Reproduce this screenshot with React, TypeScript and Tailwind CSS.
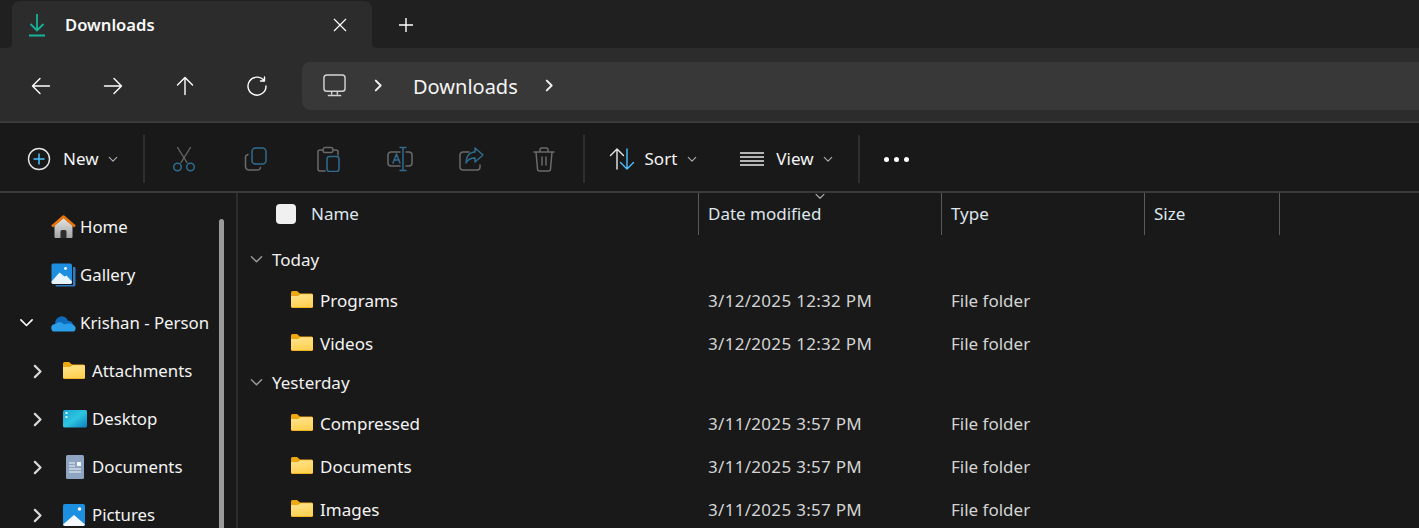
import type { ReactNode } from 'react';

const line = { fill: 'none', stroke: 'currentColor', strokeWidth: 1.3, strokeLinecap: 'round', strokeLinejoin: 'round' } as const;

const Chevron = ({ className }: { className: string }) => (
  <svg viewBox="0 0 12 8" className={className} {...line}>
    <path d="M1.500 1.500 6 6l4.500-4.500" />
  </svg>
);

const ChevronRight = ({ className }: { className: string }) => (
  <svg viewBox="0 0 8 12" className={className} {...line} strokeWidth={1.800}>
    <path d="M1.500 1.500 6 6l-4.500 4.500" />
  </svg>
);

const FolderIcon = () => (
  <svg viewBox="0 0 22 17" className="w-[22px] h-[17px] -translate-y-[1px]">
    <defs>
      <linearGradient id="folderFill" x1="0" y1="0" x2="0.300" y2="1">
        <stop offset="0" stopColor="#ffe48f" />
        <stop offset="1" stopColor="#ffd255" />
      </linearGradient>
    </defs>
    <path d="M0 1.500A1.500 1.500 0 0 1 1.500 0h4.500l3 2.500h11.500A1.500 1.500 0 0 1 22 4v11.500a1.500 1.500 0 0 1-1.500 1.500h-19A1.500 1.500 0 0 1 0 15.500z" fill="#eea812" />
    <path d="M0 5h7l2.500-1.800h11.300A1.200 1.200 0 0 1 22 4.400V15a1.200 1.200 0 0 1-1.200 1.200H1.200A1.200 1.200 0 0 1 0 15z" fill="url(#folderFill)" />
  </svg>
);

const HomeIcon = () => (
  <svg viewBox="0 0 25 24" className="w-[25px] h-[24px]">
    <defs>
      <linearGradient id="homeFill" x1="0" y1="0" x2="0" y2="1">
        <stop offset="0" stopColor="#e4e4e4" />
        <stop offset="1" stopColor="#a4a4a4" />
      </linearGradient>
    </defs>
    <path d="M3.500 10.500 12.500 3l9 7.500V22a1 1 0 0 1-1 1h-16a1 1 0 0 1-1-1z" fill="url(#homeFill)" />
    <path d="M9.500 23v-6.500a1.500 1.500 0 0 1 1.500-1.500h3a1.500 1.500 0 0 1 1.500 1.500V23z" fill="#2e2e2e" />
    <path d="M1 11.500 12.500 1.500 24 11.500" fill="none" stroke="#e8760c" strokeWidth="2.600" strokeLinejoin="round" />
  </svg>
);

const GalleryIcon = () => (
  <svg viewBox="0 0 25 24" className="w-[25px] h-[24px]">
    <path d="M22 4h1.500a1 1 0 0 1 1 1V22a1.500 1.500 0 0 1-1.500 1.500H6a1.500 1.500 0 0 1-1.500-1.500H22z" fill="#2f7cc4" />
    <rect x="0.500" y="0.500" width="20.500" height="20.500" rx="1.800" fill="#1e8fe0" />
    <circle cx="14.500" cy="5.500" r="1.400" fill="#ffffff" />
    <path d="M0.500 18.500 8.500 9.500l5 4 2-1 5.500 6v1a1.800 1.800 0 0 1-1.800 1.500H2.300a1.800 1.800 0 0 1-1.800-1.500z" fill="#e8f4fd" />
  </svg>
);

const CloudIcon = () => (
  <svg viewBox="0 0 25 17" className="w-[25px] h-[17px]">
    <path d="M4.500 10A6.500 6.500 0 0 1 17 5.800 5 5 0 0 1 22 10L10 13z" fill="#0f6cbd" />
    <path d="M1 15.500C-1 12 1 8.800 4.500 9 7 6.500 11 7 13 9.500c3.500-1.500 7-1.500 9.500.5 2.500 1.500 2.500 4 1.500 5.500a1.500 1.500 0 0 1-1.500 1H2.500A2 2 0 0 1 1 15.500z" fill="#2a9ee8" />
  </svg>
);

const DesktopIcon = () => (
  <svg viewBox="0 0 24 18" className="w-[24px] h-[18px]">
    <defs>
      <linearGradient id="desk" x1="0" y1="0" x2="1" y2="1">
        <stop offset="0" stopColor="#1aa5d6" />
        <stop offset="0.500" stopColor="#2ec5e0" />
        <stop offset="1" stopColor="#0c7fc0" />
      </linearGradient>
    </defs>
    <rect x="0" y="0" width="24" height="17.500" rx="1.500" fill="url(#desk)" />
    <rect x="2.500" y="2" width="2" height="2" fill="#e8f8fc" />
    <rect x="2.500" y="6" width="2" height="2" fill="#e8f8fc" />
  </svg>
);

const DocumentIcon = () => (
  <svg viewBox="0 0 18 24" className="w-[18px] h-[24px]">
    <rect x="0" y="0" width="18" height="24" rx="1.500" fill="#8ea4c0" />
    <rect x="11" y="7" width="4" height="4" fill="#f2f5f9" />
    <path d="M3 8h6M3 11h6M3 14h12M3 17h12" stroke="#f2f5f9" strokeWidth="1.100" />
  </svg>
);

const PicturesIcon = () => (
  <svg viewBox="0 0 22 22" className="w-[22px] h-[22px]">
    <rect x="0" y="0" width="22" height="22" rx="1.800" fill="#1d8fe1" />
    <circle cx="16.500" cy="5" r="1.800" fill="#ffffff" />
    <path d="M0 20.500 11 11l11 9.500V20a2 2 0 0 1-2 2H2a2 2 0 0 1-2-2z" fill="#f4f9fd" />
  </svg>
);

const NavIcon = ({ children }: { children: ReactNode }) => (
  <span className="w-[72px] h-[40px] flex items-center justify-center text-white">
    <svg viewBox="0 0 22 22" className="w-[22px] h-[22px]" {...line} strokeWidth={1.400}>
      {children}
    </svg>
  </span>
);

const CommandIcon = ({ children }: { children: ReactNode }) => (
  <span className="w-[72px] h-[40px] flex items-center justify-center shrink-0">
    <svg viewBox="0 0 26 26" className="w-[26px] h-[26px]" fill="none" strokeWidth="1.300" strokeLinecap="round" strokeLinejoin="round">
      {children}
    </svg>
  </span>
);

const Divider = ({ className = '' }: { className?: string }) => <div className={`w-[2px] h-[48px] bg-[#2e2e2e] shrink-0 ${className}`} />;

const SideItem = ({ icon, label, arrow, indent }: { icon: ReactNode; label: string; arrow?: 'open' | 'closed'; indent?: boolean }) => (
  <div className="h-[48px] flex items-center shrink-0 whitespace-nowrap text-[#f4f4f4]">
    <span className="w-[50px] flex shrink-0 justify-center">
      {arrow === 'open' && <Chevron className="w-[15px] h-[10px] text-white ml-[2px]" />}
      {arrow === 'closed' && <ChevronRight className="w-[10px] h-[15px] text-[#d6d6d6] ml-[26px]" />}
    </span>
    <span className={`${indent ? 'w-[42px] pl-[13px]' : 'w-[30px] pl-[1px]'} flex shrink-0 items-center`}>{icon}</span>
    <span className="text-[16.800px] leading-[24px]">{label}</span>
  </div>
);

const GroupRow = ({ label }: { label: string }) => (
  <div className="h-[35px] mb-[2px] flex items-center text-[#f0f0f0] shrink-0">
    <span className="w-[34px] pl-[11px] shrink-0">
      <Chevron className="w-[15px] h-[9px] text-[#9a9a9a]" />
    </span>
    <span className="text-[17px]">{label}</span>
  </div>
);

const FileRow = ({ name, date }: { name: string; date: string }) => (
  <div className="h-[43px] flex items-center text-[#f4f4f4] shrink-0">
    <span className="w-[82px] pl-[53px] shrink-0 flex">
      <FolderIcon />
    </span>
    <span className="w-[388px] shrink-0 text-[17px]">{name}</span>
    <span className="w-[243px] shrink-0 text-[17px] tracking-[0.300px] text-[#d4d4d4]">{date}</span>
    <span className="text-[17px] text-[#d4d4d4]">File folder</span>
  </div>
);

export default function App() {
  return (
    <div className="w-[1419px] h-[528px] overflow-hidden flex flex-col bg-[#191919] text-white font-['Noto_Sans',sans-serif]">
      {/* tab strip */}
      <div className="h-[48px] shrink-0 bg-[#2c2c2c] flex">
        <div className="w-[12px] bg-[#202020] rounded-br-[5px]" />
        <div className="bg-[#202020]">
          <div className="mt-[1px] w-[360px] h-[47px] bg-[#2c2c2c] rounded-t-[8px] flex items-center pl-[15px] pr-[25px]">
            <svg viewBox="0 0 20 24" className="w-[20px] h-[24px] text-[#17b29a]" fill="none" stroke="currentColor" strokeWidth="1.800">
              <path d="M10 1v16M3.500 11 10 17.500 16.500 11M2 22.500h16" />
            </svg>
            <span className="ml-[18px] text-[16.600px] font-semibold text-[#f8f8f8] flex-1 pt-[1px]">Downloads</span>
            <svg viewBox="0 0 14 14" className="w-[14px] h-[14px]" stroke="currentColor" strokeWidth="1.200">
              <path d="m1 1 12 12M13 1 1 13" />
            </svg>
          </div>
        </div>
        <div className="flex-1 bg-[#202020] rounded-bl-[5px] flex items-center pl-[26px] pt-[1px]">
          <svg viewBox="0 0 16 16" className="w-[16px] h-[16px]" stroke="currentColor" strokeWidth="1.400">
            <path d="M8 1v14M1 8h14" />
          </svg>
        </div>
      </div>

      {/* nav bar */}
      <div className="h-[75px] shrink-0 bg-[#2c2c2c] border-b-[2px] border-[#3a3a3a] flex items-center pl-[4.500px] pt-[2px]">
        <NavIcon><path d="M19.500 11h-17M10 3.500 2.500 11l7.500 7.500" /></NavIcon>
        <NavIcon><path d="M2.500 11h17M12 3.500l7.500 7.500-7.500 7.500" /></NavIcon>
        <NavIcon><path d="M11 19.500v-17M3.500 10 11 2.500l7.500 7.500" /></NavIcon>
        <NavIcon><path d="M18 5.500A9 9 0 1 0 20 11M18.500 2v4h-4" /></NavIcon>
        <div className="ml-[9.500px] flex-1 h-[48px] bg-[#383838] rounded-l-[8px] flex items-center pl-[21px] text-[#f4f4f4]">
          <svg viewBox="0 0 24 24" className="w-[23px] h-[23px] text-[#d4d4d4]" fill="none" stroke="currentColor" strokeWidth="1.500" strokeLinejoin="round">
            <rect x="1" y="1" width="22" height="17" rx="3" />
            <path d="M9 18v3.500M15 18v3.500M5 22.500h14" />
          </svg>
          <ChevronRight className="w-[9px] h-[13px] ml-[28px] text-[#f0f0f0]" />
          <span className="ml-[30px] text-[20px] pt-[2px]">Downloads</span>
          <ChevronRight className="w-[9px] h-[13px] ml-[27px] text-[#f0f0f0]" />
        </div>
      </div>

      {/* command bar */}
      <div className="h-[68px] shrink-0 bg-[#191919] flex items-center pt-[4px] pl-[27px]">
        <svg viewBox="0 0 24 24" className="w-[24px] h-[24px]" fill="none" strokeWidth="1.400">
          <circle cx="12" cy="12" r="10.500" stroke="#e4e4e4" />
          <path d="M12 6.500v11M6.500 12h11" stroke="#4cc2ff" strokeWidth="1.500" />
        </svg>
        <span className="ml-[12px] text-[17px] text-[#f4f4f4]">New</span>
        <Chevron className="w-[10px] h-[7px] ml-[9px] text-[#b0b0b0] mr-[25px]" />
        <Divider className="mr-[3px]" />
        <CommandIcon>
          <g stroke="#6a6a6a"><path d="M6.500 1.500 16 16.500M19.500 1.500 10 16.500" /></g>
          <g stroke="#2f6c8f" strokeWidth="1.500"><circle cx="6.500" cy="21" r="3.800" /><circle cx="19.500" cy="21" r="3.800" /></g>
        </CommandIcon>
        <CommandIcon>
          <path d="M5 8.500A3 3 0 0 0 2.500 11.500v9a3.500 3.500 0 0 0 3.500 3.500h8.500a3 3 0 0 0 3-2.500" stroke="#6a6a6a" strokeWidth="1.500" />
          <rect x="9" y="2" width="14" height="16" rx="3.500" stroke="#2f6c8f" strokeWidth="1.500" />
        </CommandIcon>
        <CommandIcon>
          <path d="M8 4H5a2 2 0 0 0-2 2v17a2 2 0 0 0 2 2h5M18 4h3a2 2 0 0 1 2 2v3" stroke="#6a6a6a" strokeWidth="1.500" />
          <rect x="8" y="1.500" width="10" height="5" rx="2" stroke="#6a6a6a" />
          <rect x="12" y="10.500" width="12" height="15" rx="2.500" stroke="#2f6c8f" strokeWidth="1.500" />
        </CommandIcon>
        <CommandIcon>
          <path d="M13 6H4a3 3 0 0 0-3 3v8a3 3 0 0 0 3 3h9M19 6h3a3 3 0 0 1 3 3v8a3 3 0 0 1-3 3h-3" stroke="#6a6a6a" strokeWidth="1.500" />
          <path d="M13 1.500h6M16 1.500v23M13 24.500h6M6 17l3.500-9 3.500 9M7 14h5" stroke="#2f6c8f" strokeWidth="1.500" />
        </CommandIcon>
        <CommandIcon>
          <path d="M10 6H4a3 3 0 0 0-3 3v12a3 3 0 0 0 3 3h14a3 3 0 0 0 3-3v-2" stroke="#6a6a6a" strokeWidth="1.500" />
          <path d="M16 2l8 7-8 7v-4c-4 0-7 1-9 5 0-6 3-11 9-11z" stroke="#2f6c8f" strokeWidth="1.500" />
        </CommandIcon>
        <CommandIcon>
          <path d="M3 6h20M5 6l1.500 17a2 2 0 0 0 2 2h9a2 2 0 0 0 2-2L21 6M9 6V3.500A1.500 1.500 0 0 1 10.500 2h5A1.500 1.500 0 0 1 17 3.500V6M11 11v8M15 11v8" stroke="#6a6a6a" strokeWidth="1.500" />
        </CommandIcon>
        <Divider className="ml-[3px]" />
        <svg viewBox="0 0 26 24" className="w-[26px] h-[24px] ml-[24px]" fill="none" strokeWidth="1.400" strokeLinecap="round" strokeLinejoin="round">
          <path d="M8 22V2M1.500 8.500 8 2l6.500 6.500" stroke="#e8e8e8" />
          <path d="M18 2v20M11.500 15.500 18 22l6.500-6.500" stroke="#4cc2ff" />
        </svg>
        <span className="ml-[10px] text-[17px] text-[#f4f4f4]">Sort</span>
        <Chevron className="w-[10px] h-[7px] ml-[10px] text-[#b0b0b0]" />
        <svg viewBox="0 0 24 14" className="w-[24px] h-[14px] ml-[43px]" stroke="#e8e8e8" strokeWidth="1.400">
          <path d="M0 1h24M0 5h24M0 9h24M0 13h24" />
        </svg>
        <span className="ml-[12px] text-[17px] text-[#f4f4f4]">View</span>
        <Chevron className="w-[10px] h-[7px] ml-[9px] text-[#b0b0b0] mr-[25px]" />
        <Divider />
        <span className="ml-[24px] flex gap-[5px]">
          <span className="w-[5px] h-[5px] rounded-full bg-white" />
          <span className="w-[5px] h-[5px] rounded-full bg-white" />
          <span className="w-[5px] h-[5px] rounded-full bg-white" />
        </span>
      </div>

      {/* body */}
      <div className="flex-1 min-h-0 flex border-t-[2px] border-[#3a3a3a]">
        <aside className="w-[236px] shrink-0 flex min-h-0 overflow-hidden">
          <div className="w-[219px] shrink-0 flex flex-col pt-[10px] overflow-hidden">
            <SideItem icon={<HomeIcon />} label="Home" />
            <SideItem icon={<GalleryIcon />} label="Gallery" />
            <SideItem icon={<CloudIcon />} label="Krishan - Person" arrow="open" />
            <SideItem icon={<FolderIcon />} label="Attachments" arrow="closed" indent />
            <SideItem icon={<DesktopIcon />} label="Desktop" arrow="closed" indent />
            <SideItem icon={<span className="pl-[3px]"><DocumentIcon /></span>} label="Documents" arrow="closed" indent />
            <SideItem icon={<PicturesIcon />} label="Pictures" arrow="closed" indent />
          </div>
          <div className="pt-[26px]">
            <div className="w-[5px] h-[320px] rounded-full bg-[#9a9a9a]" />
          </div>
        </aside>
        <div className="w-[2px] shrink-0 bg-[#2c2c2c]" />
        <main className="flex-1 min-w-0 flex flex-col overflow-hidden">
          <div className="h-[42px] shrink-0 flex text-[17px] text-[#dfe6ec]">
            <div className="w-[461px] shrink-0 flex items-center pl-[38px] border-r border-[#5a5a5a]">
              <span className="w-[20px] h-[20px] rounded-[4px] bg-[#f0f0f0] mr-[15px]" />
              Name
            </div>
            <div className="relative w-[243px] shrink-0 flex items-center pl-[9px] border-r border-[#5a5a5a]">
              <Chevron className="absolute top-[0px] left-[115px] w-[12px] h-[7px] text-[#b0b0b0]" />
              Date modified
            </div>
            <div className="w-[203px] shrink-0 flex items-center pl-[9px] border-r border-[#5a5a5a]">Type</div>
            <div className="w-[135px] shrink-0 flex items-center pl-[9px] border-r border-[#5a5a5a]">Size</div>
          </div>
          <div className="pt-[7px] flex flex-col">
            <GroupRow label="Today" />
            <FileRow name="Programs" date="3/12/2025 12:32 PM" />
            <FileRow name="Videos" date="3/12/2025 12:32 PM" />
            <GroupRow label="Yesterday" />
            <FileRow name="Compressed" date="3/11/2025 3:57 PM" />
            <FileRow name="Documents" date="3/11/2025 3:57 PM" />
            <FileRow name="Images" date="3/11/2025 3:57 PM" />
          </div>
        </main>
      </div>
    </div>
  );
}
